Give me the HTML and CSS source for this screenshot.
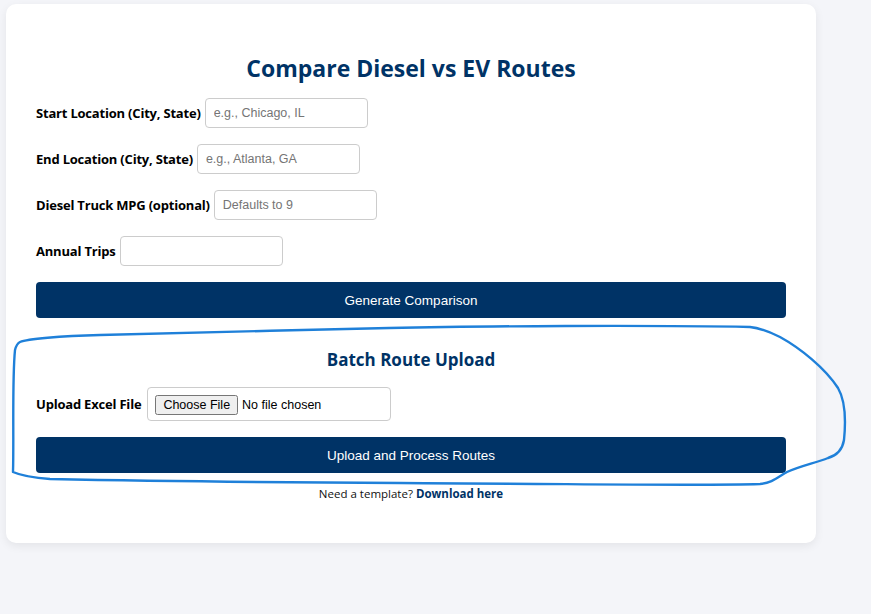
FILE: index.html
```html
<!DOCTYPE html>
<html lang="en">
<head>
<meta charset="utf-8">
<title>Compare Diesel vs EV Routes</title>
<link rel="stylesheet" href="styles.css">
</head>
<body>
<main class="card">
  <h2 class="title">Compare Diesel vs EV Routes</h2>
  <form class="form">
    <div class="row">
      <label class="label" for="start">Start Location (City, State)</label>
      <input class="field" id="start" type="text" placeholder="e.g., Chicago, IL">
    </div>
    <div class="row">
      <label class="label" for="end">End Location (City, State)</label>
      <input class="field" id="end" type="text" placeholder="e.g., Atlanta, GA">
    </div>
    <div class="row">
      <label class="label" for="mpg">Diesel Truck MPG (optional)</label>
      <input class="field" id="mpg" type="text" placeholder="Defaults to 9">
    </div>
    <div class="row">
      <label class="label" for="trips">Annual Trips</label>
      <input class="field" id="trips" type="text">
    </div>
    <button class="btn" type="button">Generate Comparison</button>
  </form>

  <section class="batch">
    <h3 class="subtitle">Batch Route Upload</h3>
    <div class="row">
      <label class="label" for="file">Upload Excel File</label>
      <input class="file" id="file" type="file">
    </div>
    <button class="btn" type="button">Upload and Process Routes</button>
    <p class="template">Need a template? <a class="link" href="#">Download here</a></p>
  </section>
</main>
<svg class="scribble" width="871" height="614" viewBox="0 0 871 614" aria-hidden="true">
  <path d="M20,342 C27,339 60,336 100,335 S300,330 389,328 S650,325 750,327 C760,328 770,332 780,337 C800,348 825,368 838,388 C845,400 846,420 844,440 C842,452 835,456 828,458 C815,463 800,466 787,472 C778,477 772,483 760,484 C700,486 600,484 400,483 S100,480 50,479 C35,478 22,476 13,472 C14,440 12,380 15,350 C16,346 18,343 20,342" fill="none" stroke="#1f80d9" stroke-width="2.4" stroke-linecap="round" stroke-linejoin="round"/>
</svg>
</body>
</html>
```

FILE: styles.css
```css
html, body {
  margin: 0;
  padding: 0;
}

body {
  background: #f4f5f9;
  font-family: "Open Sans", "Noto Sans", sans-serif;
  color: #111;
  min-height: 614px;
  position: relative;
}

.card {
  box-sizing: border-box;
  width: 810px;
  margin: 4px 0 0 6px;
  padding: 30px 30px 40px;
  background: #fff;
  border-radius: 10px;
  box-shadow: 0 3px 10px rgba(0, 0, 0, 0.07);
}

.title {
  margin: 18px 0 14px;
  text-align: center;
  font-size: 23px;
  line-height: 32px;
  font-weight: 700;
  color: #003366;
}

.form {
  display: flex;
  flex-direction: column;
  gap: 16px;
}

.row {
  display: flex;
  align-items: center;
  gap: 4px;
}

.label {
  font-size: 13px;
  font-weight: 700;
  color: #000;
  letter-spacing: -0.2px;
}

.field {
  box-sizing: border-box;
  width: 163px;
  height: 30px;
  padding: 0 8px;
  border: 1px solid #ccc;
  border-radius: 4px;
  font-family: "Liberation Sans", Arial, sans-serif;
  font-size: 12.5px;
  color: #111;
  background: #fff;
}

.field::placeholder {
  color: #757575;
}

.btn {
  display: block;
  width: 100%;
  height: 36px;
  border: 0;
  border-radius: 4px;
  background: #003366;
  color: #fff;
  font-family: "Liberation Sans", Arial, sans-serif;
  font-size: 13.5px;
}

.batch {
  display: flex;
  flex-direction: column;
  gap: 16px;
  margin-top: 30px;
}

.subtitle {
  margin: 0 0 -1px;
  text-align: center;
  font-size: 17px;
  line-height: 24px;
  font-weight: 700;
  color: #003366;
}

.file {
  box-sizing: border-box;
  width: 244px;
  height: 34px;
  padding: 7px 7px;
  border: 1px solid #ccc;
  border-radius: 4px;
  font-family: "Liberation Sans", Arial, sans-serif;
  font-size: 12.5px;
  color: #000;
  margin-left: 2px;
}

.template {
  margin: -4px 0 0;
  text-align: center;
  font-size: 11.5px;
  line-height: 18px;
  color: #111;
}

.link {
  color: #003366;
  font-weight: 700;
  text-decoration: none;
}

.scribble {
  position: absolute;
  top: 0;
  left: 0;
  pointer-events: none;
}
```
